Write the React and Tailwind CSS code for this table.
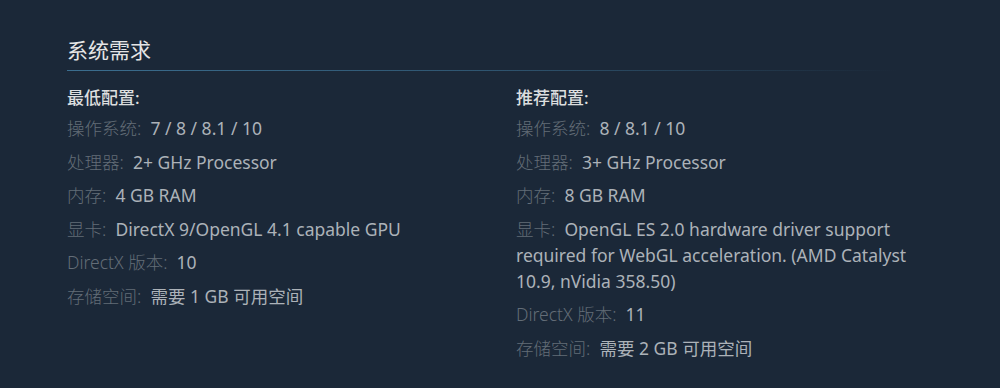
const minimum = [
  ["操作系统:", "7 / 8 / 8.1 / 10"],
  ["处理器:", "2+ GHz Processor"],
  ["内存:", "4 GB RAM"],
  ["显卡:", "DirectX 9/OpenGL 4.1 capable GPU"],
  ["DirectX 版本:", "10"],
  ["存储空间:", "需要 1 GB 可用空间"],
];

const recommended = [
  ["操作系统:", "8 / 8.1 / 10"],
  ["处理器:", "3+ GHz Processor"],
  ["内存:", "8 GB RAM"],
  ["显卡:", "OpenGL ES 2.0 hardware driver support required for WebGL acceleration. (AMD Catalyst 10.9, nVidia 358.50)"],
  ["DirectX 版本:", "11"],
  ["存储空间:", "需要 2 GB 可用空间"],
];

const ReqColumn = ({ title, rows }) => (
  <div>
    <div className="text-[17px] leading-[26px] font-medium text-[#dcdedf]">{title}</div>
    <ul className="mt-[4px]">
      {rows.map(([label, value]) => (
        <li key={label} className="mb-[7.5px] text-[17.5px] leading-[26px] text-[#acb2b8]">
          <span className="text-[#636d77] font-light">{label}</span>
          <span className="whitespace-pre-wrap">{"  " + value}</span>
        </li>
      ))}
    </ul>
  </div>
);

export default function App() {
  return (
    <div
      className="w-[1000px] h-[388px] bg-[#1b2838] pl-[67px] pt-[36px]"
      style={{ fontFamily: '"Noto Sans", "Noto Sans CJK SC", Arial, sans-serif' }}
    >
      <h2 className="text-[21px] leading-[28px] text-[#e5e5e5] font-normal">系统需求</h2>
      <div className="mt-[6px] h-px w-[830px] bg-gradient-to-r from-[#3b6e8f] via-[#2f5570] to-transparent" />
      <div className="mt-[14px] grid grid-cols-[420px_420px] gap-x-[29px]">
        <ReqColumn title="最低配置:" rows={minimum} />
        <ReqColumn title="推荐配置:" rows={recommended} />
      </div>
    </div>
  );
}
